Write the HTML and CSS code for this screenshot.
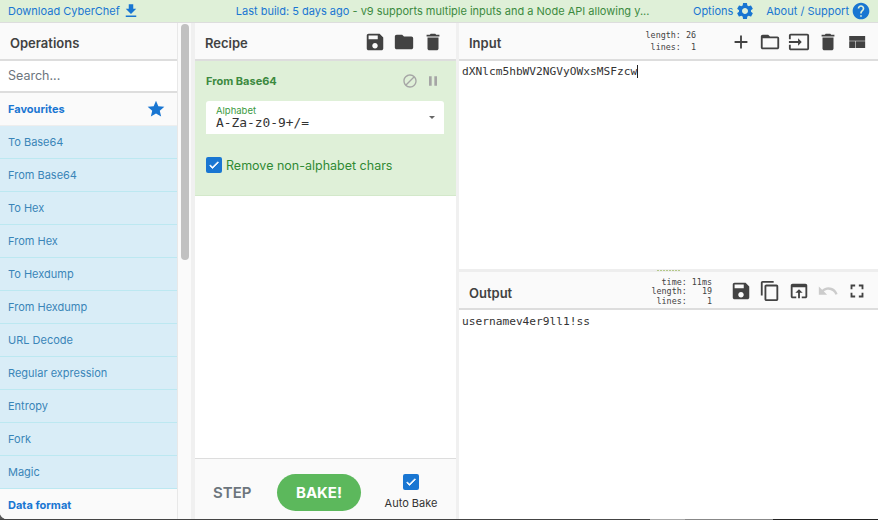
FILE: index.html
```html
<!DOCTYPE html>
<html lang="en">
<head>
<meta charset="utf-8">
<title>CyberChef</title>
<link rel="stylesheet" href="styles.css">
</head>
<body>
<div class="app">
  <header class="banner">
    <a class="dl">Download CyberChef <svg class="ic18" viewBox="0 0 24 24"><path d="M19 9h-4V3H9v6H5l7 7 7-7zM5 18v2h14v-2H5z"/></svg></a>
    <div class="notice"><span class="blue">Last build: 5 days ago</span> - v9 supports multiple inputs and a Node API allowing y...</div>
    <div class="links">
      <a class="lnk">Options <svg class="ic20" viewBox="0 0 24 24"><path d="M19.14 12.94c.04-.3.06-.61.06-.94 0-.32-.02-.64-.07-.94l2.03-1.58c.18-.14.23-.41.12-.61l-1.92-3.32c-.12-.22-.37-.29-.59-.22l-2.39.96c-.5-.38-1.03-.7-1.62-.94l-.36-2.54c-.04-.24-.24-.41-.48-.41h-3.84c-.24 0-.43.17-.47.41l-.36 2.54c-.59.24-1.13.57-1.62.94l-2.39-.96c-.22-.08-.47 0-.59.22L2.74 8.87c-.12.21-.08.47.12.61l2.03 1.58c-.05.3-.09.63-.09.94s.02.64.07.94l-2.03 1.58c-.18.14-.23.41-.12.61l1.92 3.32c.12.22.37.29.59.22l2.39-.96c.5.38 1.03.7 1.62.94l.36 2.54c.05.24.24.41.48.41h3.84c.24 0 .44-.17.47-.41l.36-2.54c.59-.24 1.13-.56 1.62-.94l2.39.96c.22.08.47 0 .59-.22l1.92-3.32c.12-.22.07-.47-.12-.61l-2.01-1.58zM12 15.6c-1.98 0-3.6-1.62-3.6-3.6s1.62-3.6 3.6-3.6 3.6 1.62 3.6 3.6-1.62 3.6-3.6 3.6z"/></svg></a>
      <a class="lnk">About / Support <svg class="ic20" viewBox="0 0 24 24"><path d="M12 2C6.48 2 2 6.48 2 12s4.48 10 10 10 10-4.48 10-10S17.52 2 12 2zm1 17h-2v-2h2v2zm2.07-7.75l-.9.92C13.45 12.9 13 13.5 13 15h-2v-.5c0-1.1.45-2.1 1.17-2.83l1.24-1.26c.37-.36.59-.86.59-1.41 0-1.1-.9-2-2-2s-2 .9-2 2H8c0-2.21 1.79-4 4-4s4 1.79 4 4c0 .88-.36 1.68-.93 2.25z"/></svg></a>
    </div>
  </header>
  <main class="workspace">
    <section class="ops">
      <div class="ops-list">
        <h2 class="title">Operations</h2>
        <div class="search">Search...</div>
        <div class="cat">Favourites <svg class="star" viewBox="0 0 24 24"><path d="M12 17.27L18.18 21l-1.64-7.03L22 9.24l-7.19-.61L12 2 9.19 8.63 2 9.24l5.46 4.73L5.82 21z"/></svg></div>
        <div class="op">To Base64</div>
        <div class="op">From Base64</div>
        <div class="op">To Hex</div>
        <div class="op">From Hex</div>
        <div class="op">To Hexdump</div>
        <div class="op">From Hexdump</div>
        <div class="op">URL Decode</div>
        <div class="op">Regular expression</div>
        <div class="op">Entropy</div>
        <div class="op">Fork</div>
        <div class="op">Magic</div>
        <div class="cat">Data format</div>
      </div>
      <div class="track"><div class="thumb"></div></div>
    </section>
    <section class="recipe">
      <div class="head">
        <h2 class="title">Recipe</h2>
        <div class="tools">
          <button class="tool"><svg viewBox="0 0 24 24"><path d="M17 3H5c-1.11 0-2 .9-2 2v14c0 1.1.89 2 2 2h14c1.1 0 2-.9 2-2V7l-4-4zm-5 16c-1.66 0-3-1.34-3-3s1.34-3 3-3 3 1.34 3 3-1.34 3-3 3zm3-10H5V5h10v4z"/></svg></button>
          <button class="tool"><svg viewBox="0 0 24 24"><path d="M10 4H4c-1.1 0-1.99.9-1.99 2L2 18c0 1.1.9 2 2 2h16c1.1 0 2-.9 2-2V8c0-1.1-.9-2-2-2h-8l-2-2z"/></svg></button>
          <button class="tool"><svg viewBox="0 0 24 24"><path d="M6 19c0 1.1.9 2 2 2h8c1.1 0 2-.9 2-2V7H6v12zM19 4h-3.5l-1-1h-5l-1 1H5v2h14V4z"/></svg></button>
        </div>
      </div>
      <div class="rec-body">
        <div class="card">
          <div class="card-head">
            <span class="card-title">From Base64</span>
            <span class="card-tools">
              <svg class="mute" viewBox="0 0 24 24"><path d="M12 2C6.48 2 2 6.48 2 12s4.48 10 10 10 10-4.48 10-10S17.52 2 12 2zM4 12c0-4.42 3.58-8 8-8 1.85 0 3.55.63 4.9 1.69L5.69 16.9C4.63 15.55 4 13.85 4 12zm8 8c-1.85 0-3.55-.63-4.9-1.69L18.31 7.1C19.37 8.45 20 10.15 20 12c0 4.42-3.58 8-8 8z"/></svg>
              <svg class="mute" viewBox="0 0 24 24"><path d="M6 19h4V5H6v14zm8-14v14h4V5h-4z"/></svg>
            </span>
          </div>
          <div class="field">
            <div class="field-label">Alphabet</div>
            <div class="field-value">A-Za-z0-9+/=</div>
            <span class="caret"></span>
          </div>
          <label class="check">
            <span class="box"><svg viewBox="0 0 24 24"><path d="M9 16.17L4.83 12l-1.41 1.41L9 19 21 7l-1.41-1.41z"/></svg></span>
            Remove non-alphabet chars
          </label>
        </div>
      </div>
      <div class="controls">
        <span class="step">STEP</span>
        <button class="bake">BAKE!</button>
        <div class="auto">
          <span class="box"><svg viewBox="0 0 24 24"><path d="M9 16.17L4.83 12l-1.41 1.41L9 19 21 7l-1.41-1.41z"/></svg></span>
          <span class="auto-label">Auto Bake</span>
        </div>
      </div>
    </section>
    <section class="io">
      <div class="pane pane-in">
        <div class="head">
          <h2 class="title">Input</h2>
          <div class="io-right">
            <pre class="stats stats-in">length: 26
 lines:  1</pre>
            <div class="tools">
              <button class="tool"><svg viewBox="0 0 24 24"><path d="M19 13h-6v6h-2v-6H5v-2h6V5h2v6h6v2z"/></svg></button>
              <button class="tool"><svg viewBox="0 0 24 24"><path d="M20 6h-8l-2-2H4c-1.1 0-1.99.9-1.99 2L2 18c0 1.1.9 2 2 2h16c1.1 0 2-.9 2-2V8c0-1.1-.9-2-2-2zm0 12H4V8h16v10z"/></svg></button>
              <button class="tool"><svg viewBox="0 0 24 24"><path d="M21 3.01H3c-1.1 0-2 .9-2 2V9h2V4.99h18v14.03H3V15H1v4.01c0 1.1.9 1.98 2 1.98h18c1.1 0 2-.88 2-1.98v-14c0-1.11-.9-2-2-2zM11 16l4-4-4-4v3H1v2h10v3z"/></svg></button>
              <button class="tool"><svg viewBox="0 0 24 24"><path d="M6 19c0 1.1.9 2 2 2h8c1.1 0 2-.9 2-2V7H6v12zM19 4h-3.5l-1-1h-5l-1 1H5v2h14V4z"/></svg></button>
              <button class="tool"><svg viewBox="0 0 24 24"><path d="M3.5 5.5h17.4v5.2H3.5zM3.5 11.3h6.6v7.2H3.5zM10.7 11.3h10.2v7.2H10.7z"/></svg></button>
            </div>
          </div>
        </div>
        <div class="text"><span class="cursor">dXNlcm5hbWV2NGVyOWxsMSFzcw</span></div>
      </div>
      <div class="split"><span class="dots"></span></div>
      <div class="pane pane-out">
        <div class="head head-out">
          <h2 class="title">Output</h2>
          <div class="io-right">
            <pre class="stats stats-out">  time: 11ms
length:   19
 lines:    1</pre>
            <div class="tools">
              <button class="tool"><svg viewBox="0 0 24 24"><path d="M17 3H5c-1.11 0-2 .9-2 2v14c0 1.1.89 2 2 2h14c1.1 0 2-.9 2-2V7l-4-4zm-5 16c-1.66 0-3-1.34-3-3s1.34-3 3-3 3 1.34 3 3-1.34 3-3 3zm3-10H5V5h10v4z"/></svg></button>
              <button class="tool"><svg viewBox="0 0 24 24"><path d="M16 1H4c-1.1 0-2 .9-2 2v14h2V3h12V1zm3 4H8c-1.1 0-2 .9-2 2v14c0 1.1.9 2 2 2h11c1.1 0 2-.9 2-2V7c0-1.1-.9-2-2-2zm0 16H8V7h11v14z"/></svg></button>
              <button class="tool"><svg viewBox="0 0 24 24"><path d="M19 4H5c-1.11 0-2 .9-2 2v12c0 1.1.89 2 2 2h4v-2H5V8h14v10h-4v2h4c1.1 0 2-.9 2-2V6c0-1.1-.89-2-2-2zm-7 6l-4 4h3v6h2v-6h3l-4-4z"/></svg></button>
              <button class="tool off"><svg viewBox="0 0 24 24"><path d="M12.5 8c-2.65 0-5.05.99-6.9 2.6L2 7v9h9l-3.62-3.62c1.39-1.16 3.16-1.88 5.12-1.88 3.54 0 6.55 2.31 7.6 5.5l2.37-.78C21.08 11.03 17.15 8 12.5 8z"/></svg></button>
              <button class="tool"><svg viewBox="0 0 24 24"><path d="M7 14H5v5h5v-2H7v-3zm-2-4h2V7h3V5H5v5zm12 7h-3v2h5v-5h-2v3zM14 5v2h3v3h2V5h-5z"/></svg></button>
            </div>
          </div>
        </div>
        <div class="text text-out">usernamev4er9ll1!ss</div>
      </div>
    </section>
  </main>
  <div class="desk"></div>
</div>
</body>
</html>
```
FILE: styles.css
```css
* { box-sizing: border-box; }
html, body { margin: 0; height: 100%; overflow: hidden; background: #fff; }
body { font-family: Inter, "Liberation Sans", sans-serif; font-size: 11px; color: #333; }
.app { width: 878px; height: 520px; display: flex; flex-direction: column; background: #5a5a5a; }
h2, pre { margin: 0; }
button { border: 0; background: none; padding: 0; font: inherit; }
svg { display: block; fill: currentColor; }

.banner { height: 23px; flex: none; background: #dff0d8; border-bottom: 1px solid #ddd; color: #3c8a3f; display: flex; align-items: center; padding: 0 7px 1px 8px; }
.dl, .lnk { color: #1976d2; display: flex; align-items: center; gap: 2px; white-space: nowrap; }
.ic18 { width: 18px; height: 18px; }
.ic20 { width: 20px; height: 20px; }
.notice { margin-left: 96px; white-space: nowrap; color: #3c8a3f; }
.blue { color: #1976d2; }
.links { margin-left: auto; display: flex; gap: 11px; }

.workspace { flex: 1; min-height: 0; display: flex; background: #fff; border-bottom-left-radius: 7px; overflow: hidden; }
.title { font-size: 13px; font-weight: 600; color: #424242; }

.ops { width: 195px; flex: none; display: flex; background: #fafafa; }
.ops-list { width: 178px; flex: none; border-right: 1px solid #e8e8e8; overflow: hidden; }
.ops-list .title { height: 38px; display: flex; align-items: center; padding: 4px 0 0 10px; border-bottom: 2px solid #ddd; }
.search { height: 32px; padding: 0 0 1px 8px; display: flex; align-items: center; font-size: 12.5px; color: #6c757d; background: #fff; border-bottom: 2px solid #ddd; }
.cat { height: 33px; padding: 0 11px 0 8px; display: flex; align-items: center; justify-content: space-between; font-weight: 700; color: #1976d2; background: #fafafa; border-bottom: 1px solid #eee; }
.star { width: 20px; height: 20px; }
.op { height: 33px; padding-left: 8px; display: flex; align-items: center; color: #3a85b8; background: #d9edf7; border-bottom: 1px solid #bce8f1; }
.track { width: 13px; flex: none; padding: 1px 0 0 3px; background: #fafafa; }
.thumb { width: 8px; height: 236px; border-radius: 4px; background: #c1c1c1; }

.recipe { flex: none; display: flex; flex-direction: column; border-left: 4px solid #f0f0f0; margin-left: -4px; width: 265px; }
.head { height: 38px; flex: none; display: flex; align-items: center; justify-content: space-between; padding: 2px 9px 0 10px; background: #fafafa; border-bottom: 2px solid #ddd; }
.head .title { margin-top: 2px; }
.tools { display: flex; }
.tool { width: 29px; height: 24px; display: flex; justify-content: center; align-items: center; color: #424242; }
.tool svg { width: 22px; height: 22px; }
.tool.off { color: #ccc; }
.rec-body { flex: 1; min-height: 0; background: #fff; }
.card { height: 135px; background: #dff0d8; border-bottom: 1px solid #d3e8ca; padding: 0 12px 0 11px; color: #2f8a34; }
.card-head { height: 40px; display: flex; align-items: center; justify-content: space-between; }
.card-title { font-weight: 700; color: #3c8a3f; }
.card-tools { display: flex; gap: 7px; margin-right: 3px; color: #a5a5a5; }
.mute { width: 16px; height: 16px; }
.field { position: relative; height: 33px; background: #fff; border-radius: 3px 3px 0 0; padding: 5px 10px 0; }
.field-label { font-size: 9.5px; line-height: 10px; color: #3a9a3f; }
.field-value { font-family: "DejaVu Sans Mono", "Liberation Mono", monospace; font-size: 12.9px; line-height: 14px; color: #333; }
.caret { position: absolute; right: 9px; top: 15px; border: 3px solid transparent; border-top: 3px solid #666; border-bottom: 0; }
.check { display: flex; align-items: center; gap: 4px; margin-top: 23px; font-size: 12.5px; color: #2f8a34; }
.box { width: 16px; height: 16px; border-radius: 2px; background: #1976d2; color: #fff; display: block; padding: 2px; }
.box svg { width: 12px; height: 12px; stroke: #fff; stroke-width: 1.5; }
.controls { height: 61px; flex: none; background: #fafafa; border-top: 1px solid #ddd; display: flex; align-items: center; padding: 6px 0 0 18px; }
.step { flex: none; font-size: 15px; font-weight: 600; color: #6c757d; width: 64px; }
.bake { flex: none; width: 84px; height: 37px; border-radius: 19px; background: #5cb85c; color: #fff; font-size: 15px; font-weight: 700; }
.auto { flex: none; display: flex; flex-direction: column; align-items: center; width: 100px; }
.auto-label { font-size: 11px; margin-top: 6px; color: #333; }

.io { flex: 1; min-width: 0; display: flex; flex-direction: column; border-left: 3px solid #f0f0f0; }
.io .head { padding: 2px 7px 0 10px; }
.io-right { display: flex; align-items: center; }
.stats { font-family: "DejaVu Sans Mono", "Liberation Mono", monospace; font-size: 8.4px; color: #424242; text-align: right; }
.stats-in { line-height: 12.5px; margin-right: 30px; margin-top: -2px; }
.stats-out { line-height: 9.5px; margin-right: 14px; margin-top: 2px; }
.pane-in { height: 246px; flex: none; background: #fff; }
.split { height: 3px; flex: none; background: #eee; display: flex; }
.dots { width: 24px; height: 1px; margin: 1px 0 0 198px; background: repeating-linear-gradient(90deg, #b5c98a 0 2px, transparent 2px 3px); }
.pane-out { flex: 1; min-height: 0; background: #fff; }
.head-out .title { margin-top: 4px; }
.text { font-family: "DejaVu Sans Mono", "Liberation Mono", monospace; font-size: 11.2px; line-height: 14px; padding: 4px 3px; color: #333; white-space: pre; }
.text-out { padding-top: 5px; }
.cursor { border-right: 1px solid #222; }

.desk { height: 1px; flex: none; background: linear-gradient(90deg, #444 0 74%, #aaa 74% 78%, #888 78% 88%, #222 88%); }
```
